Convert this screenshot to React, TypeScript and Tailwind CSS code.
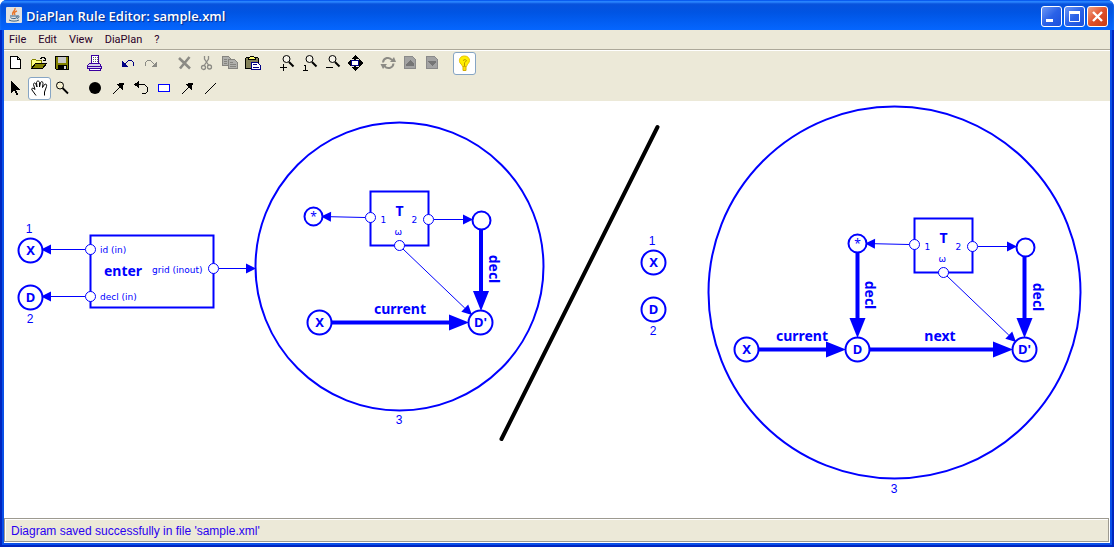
import React from "react";

type Kids = { children: React.ReactNode };

function Icon({ children }: Kids) {
  return (
    <svg className="h-[17px] w-[17px] shrink-0" viewBox="0 0 17 17" fill="none" aria-hidden="true">
      {children}
    </svg>
  );
}

function Tool({ label, on = false, narrow = false, children }: Kids & { label: string; on?: boolean; narrow?: boolean }) {
  return (
    <button
      type="button"
      aria-label={label}
      title={label}
      className={
        (narrow ? "w-[22px] " : "w-[23px] ") +
        "flex h-[23px] items-center justify-center rounded-[3px] border " +
        (on ? "border-[#86a5c4] bg-white" : "border-transparent")
      }
    >
      <Icon>{children}</Icon>
    </button>
  );
}

function Group({ children }: Kids) {
  return <div className="flex">{children}</div>;
}

function Lens({ children }: Kids) {
  return (
    <g>
      <circle cx="8.5" cy="4" r="3.5" stroke="#000" fill="#f6f4ea" />
      <path d="M11 7L15.5 11.5" stroke="#000" strokeWidth="2" />
      {children}
    </g>
  );
}

function Sign({ d }: { d: string }) {
  return <path d={d} stroke="#000" shapeRendering="crispEdges" />;
}

function DiagonalArrow() {
  return (
    <g shapeRendering="crispEdges">
      <path d="M2.5 14.5L12 5" stroke="#000" />
      <path d="M7 4L14 2.5L12.5 10Z" fill="#000" />
    </g>
  );
}

function Page({ arrow }: { arrow: string }) {
  return (
    <g shapeRendering="crispEdges">
      <path d="M2.5 1.5H10.5L13.5 4.5V13.5H2.5Z" fill="#a3a3a3" stroke="#8a8a8a" />
      <path d={arrow} fill="#757575" />
    </g>
  );
}

function Toolbars() {
  return (
    <div className="flex flex-col gap-[2px] bg-[#ece9d8] px-px py-px">
      <div className="flex gap-[10px]" role="toolbar" aria-label="Main">
        <Group>
          <Tool label="New">
            <path d="M2.5 1.5H9.5L12.5 4.5V13.5H2.5Z M9.5 1.5V4.5H12.5" fill="#fff" stroke="#000" shapeRendering="crispEdges" />
          </Tool>
          <Tool label="Open">
            <g shapeRendering="crispEdges">
              <path d="M0.5 13.5V5.5L1.5 4.5H4.5L5.5 5.5H10.5V8.5" fill="#ffff84" stroke="#848200" />
              <path d="M0.5 13.5L4.5 8.5H15.5L11.5 13.5Z" fill="#848200" stroke="#000" />
              <path d="M9 3.5H10V2.5H13V3.5H14V5 M12 5.5H15 M14.5 3V6" stroke="#000" />
            </g>
          </Tool>
          <Tool label="Save">
            <g shapeRendering="crispEdges">
              <path d="M1.5 1.5H14.5V14.5H2.5L1.5 13.5Z" fill="#848200" stroke="#000" />
              <path d="M4 2H12V8H4Z" fill="#c8c8c8" />
              <path d="M4 10H13V14H4Z" fill="#000" />
              <path d="M10 11H12V14H10Z" fill="#d8d8d8" />
            </g>
          </Tool>
        </Group>
        <Group>
          <Tool label="Print">
            <g shapeRendering="crispEdges">
              <path d="M4.5 9V0.5H11.5V9" fill="#fff" stroke="#3a00a0" />
              <path d="M6 2.5H7M8 2.5H9M10 2.5H11M6 4.5H7M8 4.5H9M10 4.5H11M6 6.5H7M8 6.5H9M10 6.5H11" stroke="#666" />
              <path d="M2.5 8.5H12.5L14.5 11.5V13.5H0.5V10.5Z" fill="#d8d4e8" stroke="#3a00a0" />
              <path d="M2.5 13.5H13.5V15.5H2.5Z" fill="#fff" stroke="#3a00a0" />
              <path d="M1 11.5H15" stroke="#3a00a0" />
            </g>
          </Tool>
        </Group>
        <Group>
          <Tool label="Undo">
            <g shapeRendering="crispEdges">
              <path d="M2 6V12H8Z" fill="#000084" />
              <path d="M4.5 9.5L8.5 5.5H11.5L13.5 7.5V10.5L12.5 11.5" stroke="#000084" />
            </g>
          </Tool>
          <Tool label="Redo">
            <g shapeRendering="crispEdges">
              <path d="M14 6V12H8Z" fill="#8a8a84" />
              <path d="M11.5 9.5L7.5 5.5H4.5L2.5 7.5V10.5L3.5 11.5" stroke="#8a8a84" />
            </g>
          </Tool>
        </Group>
        <Group>
          <Tool label="Delete">
            <path d="M3 3L14 13.5M13.5 2L4 13.5" stroke="#8c8b85" strokeWidth="2.6" />
          </Tool>
          <Tool label="Cut">
            <g stroke="#8c8b85" strokeWidth="1.3">
              <path d="M5.5 1V4L9.5 10M9.5 1V4L5.5 10" />
              <circle cx="4.5" cy="12.5" r="2" />
              <circle cx="10.5" cy="12" r="2" />
            </g>
          </Tool>
          <Tool label="Copy">
            <g shapeRendering="crispEdges">
              <path d="M0.5 1.5H6.5L9.5 4.5V10.5H0.5Z" fill="#b0b0ac" stroke="#85847f" />
              <path d="M6.5 4.5H12.5L15.5 7.5V13.5H6.5Z" fill="#b0b0ac" stroke="#85847f" />
              <path d="M2 4.5H5M2 6.5H5M2 8.5H5M8 7.5H11M8 9.5H14M8 11.5H14" stroke="#85847f" />
            </g>
          </Tool>
          <Tool label="Paste">
            <g shapeRendering="crispEdges">
              <path d="M0.5 3.5L1.5 2.5H12.5L13.5 3.5V13.5H0.5Z" fill="#84825a" stroke="#000" />
              <path d="M3.5 4.5V3.5L5.5 1.5H8.5L10.5 3.5V4.5Z" fill="#ffff6b" stroke="#000" />
              <path d="M6.5 7.5H12.5L15.5 10.5V14.5H6.5Z" fill="#fff" stroke="#000084" />
              <path d="M8 9.5H12M8 12.5H14" stroke="#000084" />
            </g>
          </Tool>
        </Group>
        <Group>
          <Tool label="Zoom in"><Lens><Sign d="M2 12.5H9M5.5 9V16" /></Lens></Tool>
          <Tool label="Actual size"><Lens><Sign d="M3 10.5H5M4.5 10V16M2 15.5H7" /></Lens></Tool>
          <Tool label="Zoom out"><Lens><Sign d="M2 12.5H9" /></Lens></Tool>
          <Tool label="Fit to window">
            <g shapeRendering="crispEdges">
              <path d="M8 0L12 4H4ZM8 16L12 12H4ZM0 8L4 4V12ZM16 8L12 4V12Z" fill="#000" />
              <path d="M8 3V13M3 8H13" stroke="#000" strokeWidth="2" />
              <path d="M4.5 5.5H11.5V10.5H4.5Z" fill="#fff" stroke="#000084" />
            </g>
          </Tool>
        </Group>
        <Group>
          <Tool label="Refresh" narrow>
            <path d="M3 7.5C3.5 2.5 9.5 1.5 12 5M13.5 8.5C13 13.5 7 14.5 4.5 11" stroke="#8c8b85" strokeWidth="2" />
            <path d="M10 7H16L14 2ZM0.5 9H7L3 14Z" fill="#8c8b85" />
          </Tool>
          <Tool label="Previous rule" narrow><Page arrow="M8 5L12 9V11H4V9Z" /></Tool>
          <Tool label="Next rule" narrow><Page arrow="M8 11L12 7V6H4V7Z" /></Tool>
        </Group>
        <Group>
          <Tool label="Hints" on>
            <path d="M8.5 1C4.5 1 3 4 3.5 6.5C4 9 6 9 6.5 11.5H10.5C11 9 13.5 8 13.5 5.5C13.5 3 11.5 1 8.5 1Z" fill="#ffee00" stroke="#e8c400" />
            <path d="M8.5 11V7.5M7 5.5L9 4.5L10.5 5.5L9 7.5" stroke="#b89a00" />
            <path d="M7 11.5H10V15.5H7Z" fill="#ffe600" stroke="#d4ac00" />
          </Tool>
        </Group>
      </div>
      <div className="flex gap-[10px]" role="toolbar" aria-label="Drawing">
        <Group>
          <Tool label="Select">
            <path d="M3 1V13L6 10L8.5 15H10.5L8 9.5H11.5Z" fill="#000" shapeRendering="crispEdges" />
          </Tool>
          <Tool label="Pan" on>
            <path d="M5 15.5L1 10C0 8 2 7.5 4 9.5L2.5 4.5C2.5 2.5 4.5 2.5 5 4.5L6 7L5.5 2.5C6 0.5 8 0.5 8.5 2.5V7L9.5 2.5C10.5 1 12 1.5 12 3.5L11.5 7.5L13.5 4.5C15 3.5 16 4.5 15.5 6.5L13.5 12V15.5" fill="#fff" stroke="#000" />
          </Tool>
          <Tool label="Magnify">
            <circle cx="6" cy="5.5" r="3.5" stroke="#000" fill="#f6f0d0" />
            <path d="M8.5 8L14 13.5" stroke="#000" strokeWidth="1.8" />
          </Tool>
        </Group>
        <Group>
          <Tool label="Node"><circle cx="8" cy="8" r="6" fill="#000" /></Tool>
          <Tool label="Edge"><DiagonalArrow /></Tool>
          <Tool label="Curved edge">
            <path d="M2 4.5H11.5L14.5 7.5V11.5L12.5 13.5H9" stroke="#000" shapeRendering="crispEdges" />
            <path d="M1 4.5L6 1V8Z" fill="#000" shapeRendering="crispEdges" />
          </Tool>
          <Tool label="Rectangle"><path d="M2.5 4.5H13.5V11.5H2.5Z" fill="#fff" stroke="#00f" shapeRendering="crispEdges" /></Tool>
          <Tool label="Arrow"><DiagonalArrow /></Tool>
          <Tool label="Line"><path d="M2.5 14.5L14 3" stroke="#000" shapeRendering="crispEdges" /></Tool>
        </Group>
      </div>
    </div>
  );
}

function Node({ x, y, r = 12, label = "" }: { x: number; y: number; r?: number; label?: string }) {
  return (
    <g>
      <circle cx={x} cy={y} r={r} fill="#fff" stroke="#00f" strokeWidth="2" />
      {r < 12 ? (
        <text x={x} y={y + 4} textAnchor="middle" className="fill-[#00f] text-[12px]">{label}</text>
      ) : (
        <text x={x} y={y + 4} textAnchor="middle" className="fill-[#00f] text-[13px] font-bold">{label}</text>
      )}
    </g>
  );
}

function Port({ x, y }: { x: number; y: number }) {
  return <circle cx={x} cy={y} r="5" fill="#fff" stroke="#00f" />;
}

function Edge({ x1, y1, x2, y2, bold = false }: { x1: number; y1: number; x2: number; y2: number; bold?: boolean }) {
  const len = Math.hypot(x2 - x1, y2 - y1);
  const ux = (x2 - x1) / len;
  const uy = (y2 - y1) / len;
  const head = bold ? 20 : 10;
  const half = bold ? 8 : 5;
  const bx = x2 - ux * head;
  const by = y2 - uy * head;
  return (
    <g>
      <line x1={x1} y1={y1} x2={bx} y2={by} stroke="#00f" strokeWidth={bold ? 4 : 1} />
      <polygon points={`${x2},${y2} ${bx - uy * half},${by + ux * half} ${bx + uy * half},${by - ux * half}`} fill="#00f" />
    </g>
  );
}

function Small({ x, y, children }: Kids & { x: number; y: number }) {
  return <text x={x} y={y} textAnchor="middle" className="fill-[#00f] font-['Liberation_Sans',sans-serif] text-[12px]">{children}</text>;
}

function PortText({ x, y, children }: Kids & { x: number; y: number }) {
  return <text x={x} y={y} className="fill-[#00f] font-['DejaVu_Sans',sans-serif] text-[9px]">{children}</text>;
}

function Bold({ x, y, turned = false, children }: Kids & { x: number; y: number; turned?: boolean }) {
  return (
    <text x={x} y={y} textAnchor="middle" transform={turned ? `rotate(90 ${x} ${y})` : undefined} className="fill-[#00f] text-[14px] font-bold">
      {children}
    </text>
  );
}

function TBox({ x, y }: { x: number; y: number }) {
  return (
    <g transform={`translate(${x} ${y})`}>
      <rect x="0" y="0" width="58" height="54" fill="#fff" stroke="#00f" strokeWidth="2" />
      <Port x={0} y={26} />
      <Port x={58} y={28} />
      <Port x={29} y={54} />
      <Bold x={29} y={24}>T</Bold>
      <PortText x={10} y={31}>1</PortText>
      <PortText x={41} y={31}>2</PortText>
      <PortText x={24} y={43}>ω</PortText>
    </g>
  );
}

function Diagram() {
  return (
    <svg viewBox="4 101 1106 417" className="block h-[417px] w-[1106px] shrink-0 font-['Noto_Sans',sans-serif]" role="img" aria-label="Rule diagram">
      <circle cx="399.5" cy="266.5" r="144" fill="#fff" stroke="#00f" strokeWidth="2" />
      <circle cx="894.5" cy="292.5" r="186" fill="#fff" stroke="#00f" strokeWidth="2" />
      <line x1="657.5" y1="127" x2="501.5" y2="439" stroke="#000" strokeWidth="4" strokeLinecap="round" />

      <rect x="90.5" y="235.5" width="123" height="72" fill="#fff" stroke="#00f" strokeWidth="2" />
      <Edge x1={85} y1={249.5} x2={41} y2={249.5} />
      <Edge x1={85} y1={296.5} x2={41} y2={296.5} />
      <Edge x1={219} y1={268.5} x2={256} y2={268.5} />
      <Port x={90.5} y={249.5} />
      <Port x={90.5} y={296.5} />
      <Port x={213.5} y={268.5} />
      <Node x={30.5} y={250.5} label="X" />
      <Node x={30.5} y={297.5} label="D" />
      <Small x={29} y={233}>1</Small>
      <Small x={30} y={323}>2</Small>
      <PortText x={100} y={253}>id (in)</PortText>
      <PortText x={100} y={300}>decl (in)</PortText>
      <PortText x={152} y={273}>grid (inout)</PortText>
      <Bold x={123} y={276}>enter</Bold>

      <Small x={399} y={424}>3</Small>
      <TBox x={370.5} y={191.5} />
      <Edge x1={365} y1={217.5} x2={321} y2={216.5} />
      <Edge x1={434} y1={219.5} x2={473} y2={219.5} />
      <Edge x1={403} y1={249} x2={472} y2={315} />
      <Edge x1={481} y1={229} x2={481} y2={311} bold />
      <Edge x1={331} y1={322.5} x2={469} y2={322.5} bold />
      <Node x={313.5} y={216.5} r={9} label="*" />
      <Node x={481.5} y={220.5} r={9} />
      <Node x={319.5} y={322.5} label="X" />
      <Node x={480.5} y={322.5} label="D'" />
      <Bold x={400} y={314}>current</Bold>
      <Bold x={489} y={269} turned>decl</Bold>

      <Small x={652} y={245}>1</Small>
      <Node x={653.5} y={262.5} label="X" />
      <Node x={653.5} y={309.5} label="D" />
      <Small x={653} y={335}>2</Small>

      <Small x={894} y={493}>3</Small>
      <TBox x={914.5} y={218.5} />
      <Edge x1={909} y1={244.5} x2={865} y2={243.5} />
      <Edge x1={978} y1={246.5} x2={1017} y2={246.5} />
      <Edge x1={947} y1={276} x2={1016} y2={342} />
      <Edge x1={857.5} y1={252} x2={857.5} y2={338} bold />
      <Edge x1={1024.5} y1={256} x2={1024.5} y2={338} bold />
      <Edge x1={758} y1={349.5} x2={846} y2={349.5} bold />
      <Edge x1={869} y1={349.5} x2={1013} y2={349.5} bold />
      <Node x={857.5} y={243.5} r={9} label="*" />
      <Node x={1025.5} y={247.5} r={9} />
      <Node x={746.5} y={349.5} label="X" />
      <Node x={857.5} y={349.5} label="D" />
      <Node x={1024.5} y={349.5} label="D'" />
      <Bold x={802} y={341}>current</Bold>
      <Bold x={940} y={341}>next</Bold>
      <Bold x={865} y={295} turned>decl</Bold>
      <Bold x={1033} y={297} turned>decl</Bold>
    </svg>
  );
}

function Caption({ label, close = false, children }: Kids & { label: string; close?: boolean }) {
  return (
    <button
      type="button"
      aria-label={label}
      className={
        "h-[21px] w-[21px] rounded-[3px] border border-white bg-linear-to-br " +
        (close ? "from-[#f0a080] via-[#e0502a] to-[#c83c10]" : "from-[#6c96f4] via-[#2a62e8] to-[#1c50dc]")
      }
    >
      <svg viewBox="0 0 19 19" className="block h-[19px] w-[19px]" aria-hidden="true">{children}</svg>
    </button>
  );
}

const menus = ["File", "Edit", "View", "DiaPlan", "?"];

export default function App() {
  return (
    <div className="flex min-h-screen flex-col overflow-hidden rounded-t-[7px] bg-[#0a4be0] font-['Noto_Sans',sans-serif]">
      <header className="relative z-10 flex h-[30px] shrink-0 items-center gap-[4px] bg-linear-to-b from-[#0a50d8] from-0% via-[#0054e3] via-40% to-[#0566ff] pr-[6px] pl-[6px] shadow-[inset_0_1px_0_#0a5cf0,inset_0_3px_2px_#2a86ff]">
        <svg viewBox="0 0 16 16" className="h-4 w-4 shrink-0" aria-hidden="true">
          <rect width="16" height="16" rx="1" fill="#e2e2e0" />
          <path d="M9 1C10 4 5 5 7 8M11 4C8 5 8 6 9 8" stroke="#e8762c" strokeWidth="1.4" fill="none" />
          <path d="M4 9H11V10C11 12 5 12 4.5 10.5M11 9C14 8 13.5 11 11 11.5M3 13C5 14.5 11 14.5 13 13" stroke="#3c6488" fill="none" />
        </svg>
        <h1 className="flex-1 pt-[4px] font-['Open_Sans',sans-serif] text-[13px] font-semibold whitespace-nowrap text-white [text-shadow:1px_1px_1px_#0b2a85]">DiaPlan Rule Editor: sample.xml</h1>
        <div className="flex gap-[2px] pt-[3px]">
          <Caption label="Minimize"><path d="M4 12H11V15H4Z" fill="#fff" /></Caption>
          <Caption label="Maximize"><path d="M4.5 5H14.5V14.5H4.5Z" fill="none" stroke="#fff" /><path d="M4 4H15V7H4Z" fill="#fff" /></Caption>
          <Caption label="Close" close><path d="M5 5L14 14M14 5L5 14" stroke="#fff" strokeWidth="2.4" /></Caption>
        </div>
      </header>
      <div className="mx-1 mb-1 flex flex-1 flex-col bg-white shadow-[0_0_0_2px_#0a50e8,0_0_0_4px_#0025c0]">
        <nav className="flex h-[19px] shrink-0 items-start gap-[12px] bg-[#ece9d8] pl-[5px]">
          {menus.map((m) => (
            <button key={m} type="button" className="font-['Roboto',sans-serif] text-[11px] leading-[20px] text-[#2a0028]">{m}</button>
          ))}
        </nav>
        <div className="h-[2px] shrink-0 border-t border-[#aca899] bg-white" />
        <Toolbars />
        <main className="flex flex-1 overflow-hidden bg-white">
          <Diagram />
        </main>
        <footer className="bg-white pr-px pb-px">
          <div className="border border-[#9d9a90] bg-[#ece9d8]">
            <p className="border-t border-l border-white pt-px pl-[5px] font-['Liberation_Sans',sans-serif] text-[12px] leading-[20px] text-[#2a00f0]">
              Diagram saved successfully in file 'sample.xml'
            </p>
          </div>
        </footer>
      </div>
    </div>
  );
}
